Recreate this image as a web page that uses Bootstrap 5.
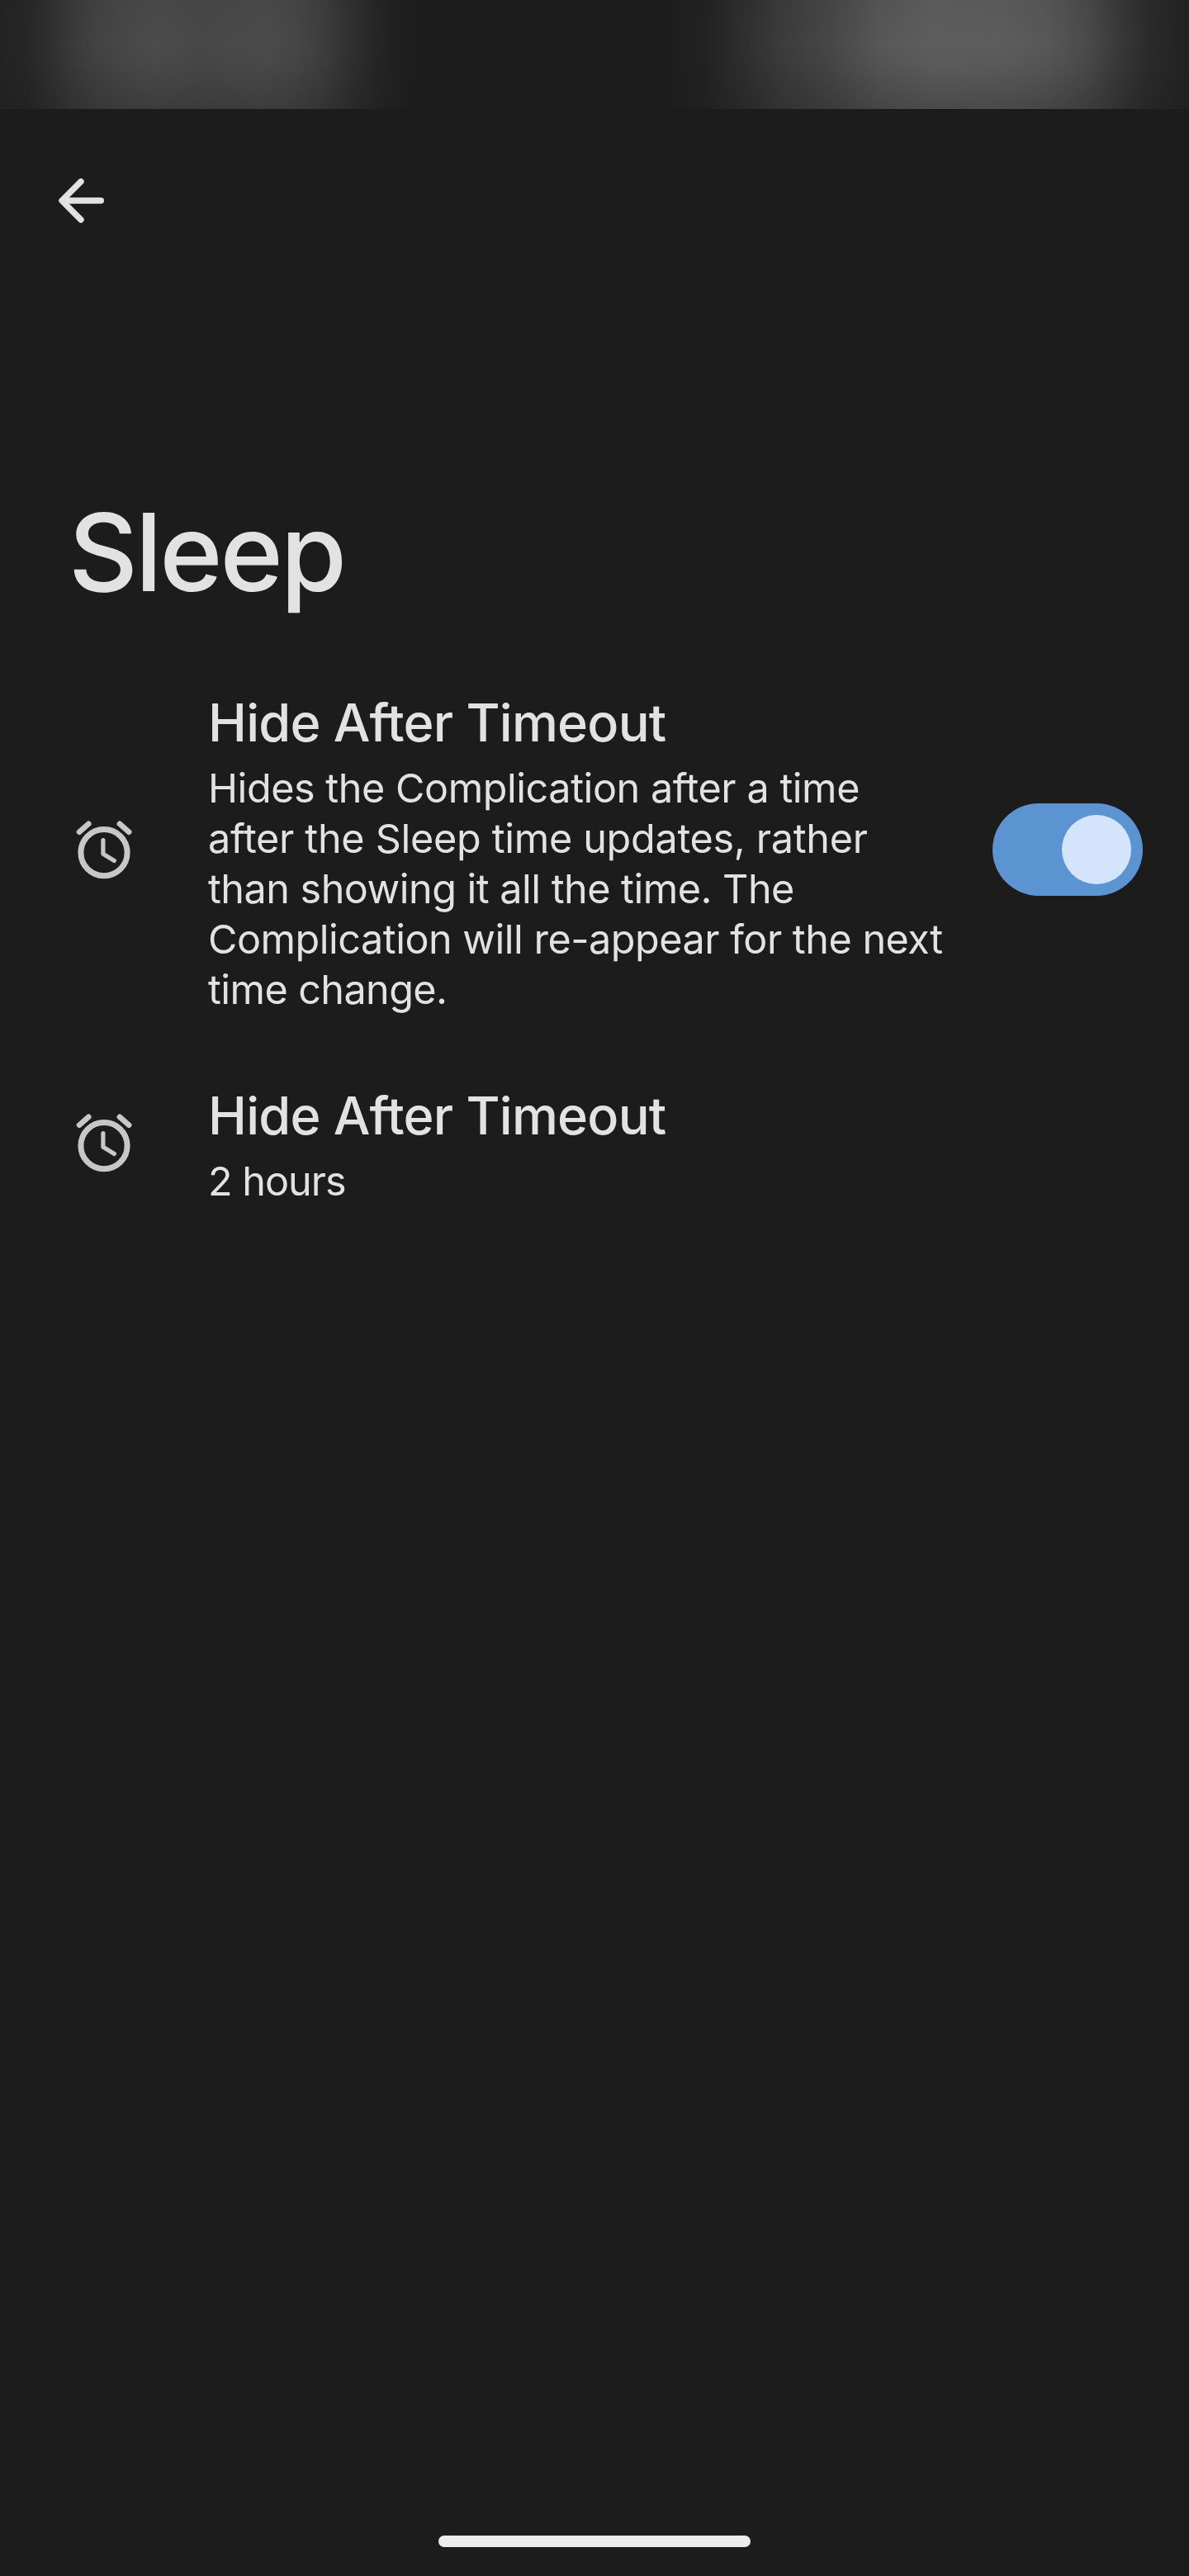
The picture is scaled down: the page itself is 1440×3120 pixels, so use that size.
<!DOCTYPE html>
<html lang="en" data-bs-theme="dark">
<head>
<meta charset="utf-8">
<meta name="viewport" content="width=device-width, initial-scale=1">
<title>Sleep</title>
<link rel="stylesheet" href="https://cdn.jsdelivr.net/npm/bootstrap@5.3.0/dist/css/bootstrap.min.css">
<style>
  body { background: #1c1c1c; color: #e2e2e2; font-family: Inter, "Liberation Sans", sans-serif; }
  .screen { height: 3120px; }
  .status-strip {
    height: 132px;
    background:
      linear-gradient(to bottom, rgba(28,28,28,.06) 0, rgba(28,28,28,0) 40%, rgba(28,28,28,.05) 58%, rgba(28,28,28,.3) 100%),
      linear-gradient(to right, #232323 0, #262626 30px, #2f2f2f 60px, #3b3b3b 90px, #434343 120px, #494949 160px,
        #4b4b4b 190px, #484848 245px, #4b4b4b 320px, #474747 355px, #3e3e3e 390px, #303030 425px, #242424 460px,
        #1e1e1e 495px, #1c1c1c 530px, #1c1c1c 800px, #222 855px, #2d2d2d 895px, #3b3b3b 945px, #474747 1005px,
        #575757 1065px, #5e5e5e 1130px, #5d5d5d 1210px, #575757 1270px, #4b4b4b 1315px, #393939 1355px,
        #2b2b2b 1390px, #242424 1425px, #222 1440px);
  }
  .top-bar { height: 222px; padding-left: 60px; }
  .back { width: 78px; height: 78px; color: #e2e2e2; line-height: 0; }
  .page-title, .pref-title { color: #e2e2e2; font-weight: 500; }
  .page-title { margin: 240px 0 45px 83px; font-size: 130px; line-height: 150px; letter-spacing: -3.2px; }
  .pref { padding: 40px 56px 38px 84px; gap: 84px; }
  .pref-body { min-width: 0; padding-top: 8px; }
  .pref-short .pref-body { padding-top: 6px; }
  .pref-title { font-size: 63px; line-height: 76px; letter-spacing: -.75px; margin-bottom: 11px; }
  .pref-text { font-size: 48.5px; line-height: 61px; }
  .pref-text span { display: block; white-space: nowrap; }
  .t1 { letter-spacing: -.44px; }
  .t2 { letter-spacing: -.29px; }
  .t3 { letter-spacing: -.5px; }
  .t4 { letter-spacing: -.48px; }
  .t5 { letter-spacing: -.57px; }
  .t6 { letter-spacing: -.98px; }
  .toggle { width: 182px; height: 112px; padding: 14px; background: #5c93d1; }
  .knob { width: 84px; height: 84px; background: #d3e4fc; }
  .nav-pill { width: 378px; height: 14px; margin-bottom: 35px; background: #ececec; }
</style>
<script src="https://cdn.jsdelivr.net/npm/bootstrap@5.3.0/dist/js/bootstrap.bundle.min.js"></script>
</head>
<body>
<svg class="d-none" aria-hidden="true">
  <symbol id="alarm" viewBox="0 0 84 84">
    <g fill="none" stroke="#c7c7c7" stroke-linecap="round" stroke-linejoin="round">
      <circle cx="42" cy="45.7" r="28.1" stroke-width="7"/>
      <path d="M40.9 30.6V47.3L54.4 55.4" stroke-width="5.2"/>
      <path d="M23.3 10.8 12 20.7M60.9 10.8 72.2 20.7" stroke-width="6.6"/>
    </g>
  </symbol>
</svg>
<div class="screen d-flex flex-column overflow-hidden">
  <div class="status-strip flex-shrink-0"></div>
  <header class="top-bar d-flex align-items-center flex-shrink-0">
    <button class="back btn border-0 p-0" type="button" aria-label="Back">
      <svg width="78" height="78" viewBox="0 0 78 78" fill="none" stroke="currentColor" stroke-width="7.4" stroke-linecap="round" stroke-linejoin="round">
        <path d="M62.3 39H16M38 15.9 14.9 39 38 62.1"/>
      </svg>
    </button>
  </header>
  <h1 class="page-title">Sleep</h1>
  <main>
    <div class="pref d-flex align-items-center">
      <svg class="flex-shrink-0" width="84" height="84"><use href="#alarm"/></svg>
      <div class="pref-body flex-grow-1">
        <h2 class="pref-title">Hide After Timeout</h2>
        <p class="pref-text mb-0">
          <span class="t1">Hides the Complication after a time</span>
          <span class="t2">after the Sleep time updates, rather</span>
          <span class="t3">than showing it all the time. The</span>
          <span class="t4">Complication will re-appear for the next</span>
          <span class="t5">time change.</span>
        </p>
      </div>
      <div class="toggle rounded-pill d-flex justify-content-end flex-shrink-0" role="switch" aria-checked="true">
        <div class="knob rounded-circle"></div>
      </div>
    </div>
    <div class="pref pref-short d-flex align-items-center">
      <svg class="flex-shrink-0" width="84" height="84"><use href="#alarm"/></svg>
      <div class="pref-body flex-grow-1">
        <h2 class="pref-title">Hide After Timeout</h2>
        <p class="pref-text mb-0"><span class="t6">2 hours</span></p>
      </div>
    </div>
  </main>
  <div class="nav-pill rounded-pill mt-auto mx-auto flex-shrink-0"></div>
</div>
</body>
</html>
